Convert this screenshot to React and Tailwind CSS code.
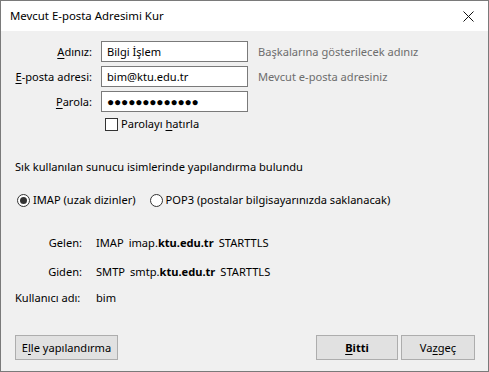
import React from "react";

const font = { fontFamily: '"Noto Sans", "Open Sans", sans-serif' };

function Label({ u, rest }) {
  return (
    <span className="whitespace-nowrap">
      <span className="underline underline-offset-2">{u}</span>
      {rest}
    </span>
  );
}

export default function App() {
  return (
    <div
      className="w-[489px] h-[372px] bg-[#f0f0f0] border border-[#7a7a7a] flex flex-col text-[11.1px] leading-[16px] text-black overflow-hidden"
      style={font}
    >
      <div className="h-[30px] bg-white flex items-center justify-between pl-[9px] pr-[14px] shrink-0">
        <span className="text-[11.4px]">Mevcut E-posta Adresimi Kur</span>
        <svg width="11" height="11" viewBox="0 0 11 11">
          <path d="M0.5 0.5 L10.5 10.5 M10.5 0.5 L0.5 10.5" stroke="#111" strokeWidth="1" />
        </svg>
      </div>

      <div className="flex-1 flex flex-col pl-[14px] pr-[12px] pt-[10px]">
        <div className="grid grid-cols-[77px_147px_auto] gap-x-[9px] gap-y-[4px] items-center">
          <div className="text-right">
            <Label u="A" rest="dınız:" />
          </div>
          <div className="h-[21px] bg-white border border-[#7a7a7a] flex items-center px-[5px]">Bilgi İşlem</div>
          <div className="pl-[1px] text-[#6d6d6d] whitespace-nowrap">Başkalarına gösterilecek adınız</div>

          <div className="text-right">
            <Label u="E" rest="-posta adresi:" />
          </div>
          <div className="h-[21px] bg-white border border-[#7a7a7a] flex items-center px-[5px]">bim@ktu.edu.tr</div>
          <div className="pl-[1px] text-[#6d6d6d] whitespace-nowrap">Mevcut e-posta adresiniz</div>

          <div className="text-right">
            <Label u="P" rest="arola:" />
          </div>
          <div className="h-[21px] bg-white border border-[#7a7a7a] flex items-center px-[5px] text-[12px] tracking-[-0.2px]">
            ●●●●●●●●●●●●●
          </div>
          <div></div>

          <div></div>
          <div className="flex items-center gap-[3px] pl-[4px]">
            <span className="w-[13px] h-[13px] bg-white border border-[#333] inline-block"></span>
            <span className="whitespace-nowrap">
              Parolayı <span className="underline underline-offset-2">h</span>atırla
            </span>
          </div>
          <div></div>
        </div>

        <div className="mt-[27px] whitespace-nowrap">Sık kullanılan sunucu isimlerinde yapılandırma bulundu</div>

        <div className="mt-[17px] flex items-center pl-[2px] whitespace-nowrap">
          <span className="w-[13px] h-[13px] rounded-full border border-[#333] bg-white flex items-center justify-center">
            <span className="w-[7px] h-[7px] rounded-full bg-[#333]"></span>
          </span>
          <span className="ml-[3px]">IMAP (uzak dizinler)</span>
          <span className="ml-[14px] w-[13px] h-[13px] rounded-full border border-[#333] bg-white"></span>
          <span className="ml-[3px]">POP3 (postalar bilgisayarınızda saklanacak)</span>
        </div>

        <div className="mt-[27px] grid grid-cols-[67px_auto] gap-x-[14px] gap-y-[13px]">
          <div className="text-right">Gelen:</div>
          <div className="flex gap-[5px]">
            <span>IMAP</span>
            <span>
              imap.<b>ktu.edu.tr</b>
            </span>
            <span>STARTTLS</span>
          </div>
          <div className="text-right">Giden:</div>
          <div className="flex gap-[5px]">
            <span>SMTP</span>
            <span>
              smtp.<b>ktu.edu.tr</b>
            </span>
            <span>STARTTLS</span>
          </div>
        </div>
        <div className="mt-[10px] flex">
          <span className="w-[81px]">Kullanıcı adı:</span>
          <span>bim</span>
        </div>

        <div className="mt-auto mb-[11px] flex items-center">
          <button className="h-[25px] w-[103px] bg-[#e1e1e1] border border-[#adadad] flex items-center justify-center">
            <span>
              E<span className="underline underline-offset-2">l</span>le yapılandırma
            </span>
          </button>
          <div className="flex-1"></div>
          <button className="h-[25px] w-[82px] bg-[#e1e1e1] border border-[#adadad] flex items-center justify-center font-bold">
            <span>
              <span className="underline underline-offset-2">B</span>itti
            </span>
          </button>
          <button className="ml-[3px] mr-[1px] h-[25px] w-[74px] bg-[#e1e1e1] border border-[#adadad] flex items-center justify-center">
            <span>
              Va<span className="underline underline-offset-2">z</span>geç
            </span>
          </button>
        </div>
      </div>
    </div>
  );
}
